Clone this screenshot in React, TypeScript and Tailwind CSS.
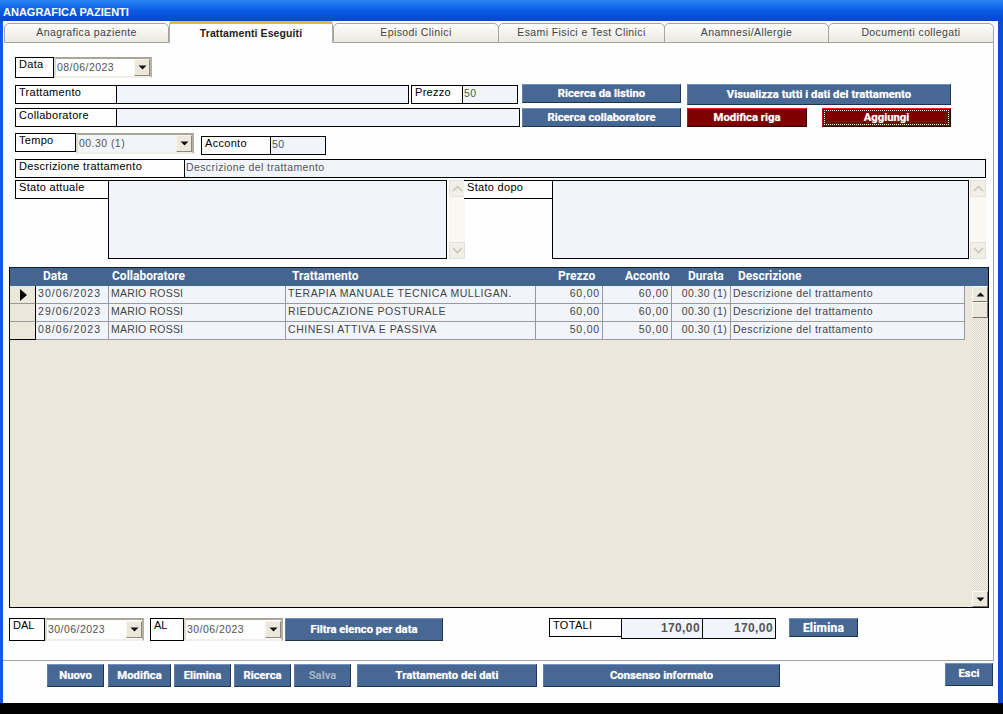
import React from "react";

type P = { className?: string; children?: React.ReactNode };

const Lbl = ({ className = "", children }: P) => (
  <div className={`shrink-0 border border-black bg-[#fdfefd] pl-[3px] text-[11px] leading-[13px] tracking-[0.3px] text-black whitespace-nowrap ${className}`}>
    {children}
  </div>
);

const Field = ({ className = "", children }: P) => (
  <div className={`shrink-0 -ml-px border border-black bg-[#f1f5fb] pl-[1px] text-[10.5px] leading-[15px] tracking-[0.4px] text-[#555] whitespace-nowrap ${className}`}>
    {children}
  </div>
);

const Arrow = ({ up = false }: { up?: boolean }) => (
  <svg width="9" height="5" viewBox="0 0 9 5" className={up ? "rotate-180" : ""}>
    <path d="M0.5 0.5H8.5L4.5 4.5Z" fill="#111" />
  </svg>
);

const Chevron = ({ up = false }: { up?: boolean }) => (
  <svg width="11" height="7" viewBox="0 0 11 7" className={up ? "" : "rotate-180"}>
    <path d="M1 6L5.5 1.5L10 6" fill="none" stroke="#c9c8bd" strokeWidth="1.6" />
  </svg>
);

const Combo = ({ className = "", children }: P) => (
  <div className={`shrink-0 flex items-center justify-between border-2 border-t-[#a9a598] border-r-[#b5b1a4] border-b-[#f1efe8] border-l-[#dcd9cf] pl-[1px] text-[10.5px] tracking-[0.45px] text-[#555] whitespace-nowrap ${className}`}>
    <span>{children}</span>
    <span className="flex h-[17px] w-[16px] items-center justify-center border border-t-[#f6f4ec] border-l-[#f6f4ec] border-r-[#8c887c] border-b-[#8c887c] bg-[#ece8dc]">
      <Arrow />
    </span>
  </div>
);

const Btn = ({ className = "", muted = false, flat = false, children }: P & { muted?: boolean; flat?: boolean }) => (
  <div className={`shrink-0 flex items-center justify-center border border-t-[#6f93c2] border-l-[#5b7fae] border-r-[#22384f] border-b-[#1d3148] bg-[#466892] text-[11.3px] font-bold whitespace-nowrap ${flat ? "" : "pt-[2px]"} ${muted ? "text-[#a8b4c4]" : "text-white [text-shadow:0_0_1px_rgba(255,255,255,0.6)]"} ${className} font-['Roboto',sans-serif]`}>
    {children}
  </div>
);

const RedBtn = ({ className = "", children }: P) => (
  <div className={`shrink-0 flex items-center justify-center border border-t-[#f01818] border-l-[#c01010] border-r-[#300000] border-b-[#300000] bg-[#800000] text-[11.3px] font-bold text-white [text-shadow:0_0_1px_rgba(255,255,255,0.6)] whitespace-nowrap font-['Roboto',sans-serif] ${className}`}>
    {children}
  </div>
);

const ScrollGhost = () => (
  <div className="flex h-[79px] w-[16px] shrink-0 flex-col justify-between bg-[#f9f8f3]">
    <div className="flex h-[17px] items-center justify-center border border-[#e4e2d8] bg-[#f1efe7]">
      <Chevron up />
    </div>
    <div className="flex h-[17px] items-center justify-center border border-[#e4e2d8] bg-[#f1efe7]">
      <Chevron />
    </div>
  </div>
);

const Tab = ({ className = "", children }: P) => (
  <div className={`flex h-[20px] shrink-0 items-center justify-center rounded-t-[5px] border border-[#a4a4a0] bg-gradient-to-b from-[#fdfdfb] to-[#ebe9e2] text-[10.5px] tracking-[0.4px] text-[#444] ${className}`}>
    {children}
  </div>
);

const rows = [
  ["30/06/2023", "MARIO ROSSI", "TERAPIA MANUALE TECNICA MULLIGAN.", "60,00", "60,00"],
  ["29/06/2023", "MARIO ROSSI", "RIEDUCAZIONE POSTURALE", "60,00", "60,00"],
  ["08/06/2023", "MARIO ROSSI", "CHINESI ATTIVA E PASSIVA", "50,00", "50,00"],
];

const Cell = ({ className = "", children }: P) => (
  <div className={`h-[18px] overflow-hidden border-r border-b border-[#9a9a9a] bg-[#f1f5fb] pl-[2px] text-[10.5px] leading-[14px] text-[#444] whitespace-nowrap ${className}`}>
    {children}
  </div>
);

export default function App() {
  return (
    <div className="flex h-[714px] w-[1003px] flex-col bg-black font-['Liberation_Sans',Arial,sans-serif]">
      <div className="flex h-[703px] flex-col border-r-[5px] border-l-[3px] border-r-[#0a4fd0] border-l-[#0a5ce0] bg-[#fdfefd]">
        <div className="-mx-[3px] -mr-[5px] h-[21px] shrink-0 bg-gradient-to-b from-[#2a86f0] via-[#0a5be6] to-[#0648c8] pl-[3px] text-[11px] font-bold leading-[24px] text-white">
          ANAGRAFICA PAZIENTI
        </div>

        <div className="relative ml-px mt-[2px] flex h-[19px] w-[990px] shrink-0 items-start">
          <Tab className="w-[165px]">Anagrafica paziente</Tab>
          <div className="relative z-10 -mt-[2px] flex h-[22px] w-[164px] shrink-0 items-center justify-center rounded-t-[3px] border-t-[3px] border-r border-l border-t-[#eab34a] border-r-[#b0aea6] border-l-[#b0aea6] bg-[#fdfefd] text-[10.5px] font-bold tracking-[0.1px] text-[#222]">
            Trattamenti Eseguiti
          </div>
          <Tab className="w-[166px]">Episodi Clinici</Tab>
          <Tab className="-ml-px w-[167px]">Esami Fisici e Test Clinici</Tab>
          <Tab className="-ml-px w-[165px]">Anamnesi/Allergie</Tab>
          <Tab className="-ml-px w-[166px]">Documenti collegati</Tab>
        </div>

        <div className="flex h-[619px] w-[991px] shrink-0 flex-col border-r border-b border-[#a4a4a0] border-t-0">
          <div className="ml-[12px] mt-[15px] flex h-[21px] items-start">
            <Lbl className="h-[21px] w-[39px]">Data</Lbl>
            <Combo className="h-[21px] w-[98px]">08/06/2023</Combo>
          </div>

          <div className="ml-[12px] mt-[6px] flex h-[21px] items-start">
            <Lbl className="mt-px h-[19px] w-[102px]">Trattamento</Lbl>
            <Field className="mt-px h-[19px] w-[293px]" />
            <Lbl className="ml-[2px] mt-px h-[19px] w-[52px]">Prezzo</Lbl>
            <Field className="mt-px h-[19px] w-[56px]">50</Field>
            <Btn className="ml-[4px] h-[19px] w-[159px]">Ricerca da listino</Btn>
            <Btn className="ml-[6px] h-[21px] w-[264px]">Visualizza tutti i dati del trattamento</Btn>
          </div>

          <div className="ml-[12px] mt-[3px] flex h-[19px] items-start">
            <Lbl className="h-[19px] w-[102px]">Collaboratore</Lbl>
            <Field className="h-[19px] w-[404px]" />
            <Btn className="ml-[2px] h-[19px] w-[159px]">Ricerca collaboratore</Btn>
            <RedBtn className="ml-[6px] h-[19px] w-[120px] pt-[2px]">Modifica riga</RedBtn>
            <RedBtn className="ml-[15px] h-[19px] w-[129px] p-[1px]">
              <span className="flex h-full w-full items-center justify-center border border-dotted border-white pt-[1px]">Aggiungi</span>
            </RedBtn>
          </div>

          <div className="ml-[12px] mt-[6px] flex h-[22px] items-start">
            <Lbl className="h-[19px] w-[61px]">Tempo</Lbl>
            <Combo className="h-[21px] w-[118px] bg-[#f1f5fb]">00.30 (1)</Combo>
            <Lbl className="ml-[7px] mt-[3px] h-[19px] w-[70px]">Acconto</Lbl>
            <Field className="mt-[3px] h-[19px] w-[56px]">50</Field>
          </div>

          <div className="ml-[12px] mt-[4px] flex h-[19px] items-start">
            <Lbl className="h-[19px] w-[170px]">Descrizione trattamento</Lbl>
            <Field className="h-[19px] w-[802px]">Descrizione del trattamento</Field>
          </div>

          <div className="ml-[12px] mt-[2px] flex h-[79px] items-start">
            <Lbl className="h-[19px] w-[94px]">Stato attuale</Lbl>
            <Field className="h-[79px] w-[339px]" />
            <div className="ml-[2px]">
              <ScrollGhost />
            </div>
            <Lbl className="-ml-px h-[19px] w-[89px] border-l-0 pl-[2px]">Stato dopo</Lbl>
            <Field className="h-[79px] w-[417px]" />
            <div className="ml-[1px]">
              <ScrollGhost />
            </div>
          </div>

          <div className="ml-[6px] mt-[8px] flex h-[341px] w-[980px] flex-col border-x border-b border-black bg-[#ebe7da]">
            <div className="grid h-[19px] shrink-0 grid-cols-[25px_73px_177px_250px_67px_69px_59px_258px] border-t border-[#10202f] bg-[#44658f] text-[12px] font-bold leading-[17px] text-white font-['Roboto',sans-serif]">
              <div />
              <div className="pl-[8px]">Data</div>
              <div className="pl-[4px]">Collaboratore</div>
              <div className="pl-[7px]">Trattamento</div>
              <div className="pl-[23px]">Prezzo</div>
              <div className="pl-[23px]">Acconto</div>
              <div className="pl-[17px]">Durata</div>
              <div className="pl-[8px]">Descrizione</div>
            </div>
            <div className="flex min-h-0 flex-1 items-stretch justify-between">
              <div className="grid h-[54px] grid-cols-[26px_73px_177px_250px_67px_69px_59px_234px]">
                {rows.map((r, i) => (
                  <React.Fragment key={r[0]}>
                    <div className={`flex h-[18px] items-center border-r border-b border-r-black border-b-[#9a9a9a] bg-[#ebe7da] pl-[10px] ${i === 2 ? "border-b-black" : ""}`}>
                      {i === 0 && (
                        <svg width="7" height="12" viewBox="0 0 7 12">
                          <path d="M0 0L7 6L0 12Z" fill="#000" />
                        </svg>
                      )}
                    </div>
                    <Cell className="pl-[1px] tracking-[1.05px]">{r[0]}</Cell>
                    <Cell className="tracking-[0.2px]">{r[1]}</Cell>
                    <Cell className="tracking-[0.55px]">{r[2]}</Cell>
                    <Cell className="pr-[2px] text-right tracking-[0.8px]">{r[3]}</Cell>
                    <Cell className="pr-[2px] text-right tracking-[0.8px]">{r[4]}</Cell>
                    <Cell className="pr-[3px] text-right tracking-[0.35px]">00.30 (1)</Cell>
                    <Cell className="tracking-[0.45px]">Descrizione del trattamento</Cell>
                  </React.Fragment>
                ))}
              </div>
              <div className="flex w-[16px] shrink-0 flex-col bg-[repeating-conic-gradient(#f6f4ec_0_25%,#d9d5c8_0_50%)] bg-[length:2px_2px]">
                <div className="flex h-[16px] shrink-0 items-center justify-center border border-t-[#fbfaf5] border-l-[#fbfaf5] border-r-[#77746a] border-b-[#77746a] bg-[#ece8dc]">
                  <Arrow up />
                </div>
                <div className="h-[16px] shrink-0 border border-t-[#fbfaf5] border-l-[#fbfaf5] border-r-[#77746a] border-b-[#77746a] bg-[#ece8dc]" />
                <div className="flex-1" />
                <div className="flex h-[16px] shrink-0 items-center justify-center border border-t-[#fbfaf5] border-l-[#fbfaf5] border-r-[#77746a] border-b-[#77746a] bg-[#ece8dc]">
                  <Arrow />
                </div>
              </div>
            </div>
          </div>

          <div className="ml-[6px] mt-[10px] flex h-[23px] items-start">
            <Lbl className="h-[23px] w-[36px] pl-[2px] tracking-normal">DAL</Lbl>
            <Combo className="h-[23px] w-[99px] tracking-[0.6px]">30/06/2023</Combo>
            <Lbl className="ml-[6px] h-[23px] w-[34px] pl-[3px] tracking-normal">AL</Lbl>
            <Combo className="h-[23px] w-[99px] tracking-[0.6px]">30/06/2023</Combo>
            <Btn className="ml-[2px] h-[23px] w-[158px]">Filtra elenco per data</Btn>
            <Lbl className="ml-[106px] h-[19px] w-[73px]">TOTALI</Lbl>
            <Field className="h-[21px] w-[82px] pr-[2px] text-right text-[12px] font-bold leading-[18px] tracking-[0.2px] text-[#222]">170,00</Field>
            <Field className="h-[21px] w-[74px] pr-[2px] text-right text-[12px] font-bold leading-[18px] tracking-[0.2px] text-[#222]">170,00</Field>
            <Btn flat className="ml-[13px] h-[19px] w-[69px] text-[12px] tracking-[0.2px]">Elimina</Btn>
          </div>
        </div>

        <div className="flex min-h-0 flex-1 items-start pt-[2px]">
          <Btn className="ml-[44px] mt-[1px] h-[23px] w-[57px]">Nuovo</Btn>
          <Btn className="ml-[4px] mt-[1px] h-[23px] w-[63px]">Modifica</Btn>
          <Btn className="ml-[3px] mt-[1px] h-[23px] w-[57px]">Elimina</Btn>
          <Btn className="ml-[3px] mt-[1px] h-[23px] w-[57px]">Ricerca</Btn>
          <Btn muted className="ml-[3px] mt-[1px] h-[23px] w-[57px]">Salva</Btn>
          <Btn className="ml-[6px] mt-[1px] h-[23px] w-[180px]">Trattamento dei dati</Btn>
          <Btn className="ml-[6px] mt-[1px] h-[23px] w-[237px]">Consenso informato</Btn>
          <Btn flat className="ml-[165px] h-[23px] w-[48px]">Esci</Btn>
        </div>
      </div>
    </div>
  );
}
